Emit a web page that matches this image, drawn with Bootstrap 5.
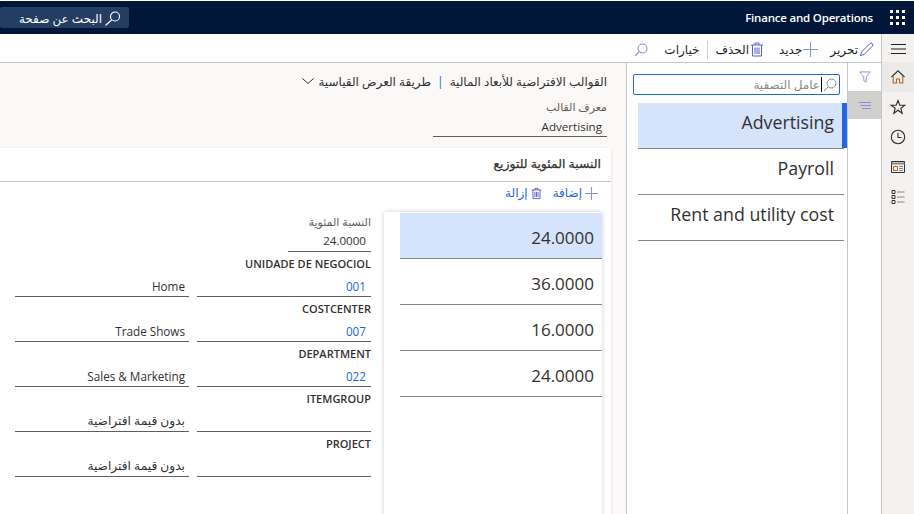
<!DOCTYPE html>
<html lang="ar" dir="rtl">
<head>
<meta charset="utf-8">
<title>Finance and Operations</title>
<link rel="stylesheet" href="https://cdn.jsdelivr.net/npm/bootstrap@5.3.0/dist/css/bootstrap.min.css">
<style>
html,body{height:100%;overflow:hidden;margin:0}
body{font-family:"Open Sans","Noto Sans","DejaVu Sans",sans-serif;font-size:12px;color:#323130;background:#fff;width:914px;height:514px}
svg{display:block;flex:none}
.topbar{height:33px;margin-top:1px;background:#00173a;color:#fff;padding-right:9px}
.waffle{display:grid;grid-template-columns:repeat(3,3px);gap:3px;width:15px;margin-left:17px}
.waffle i{width:3px;height:3px;background:#fff}
.appname{font-size:11.5px;font-weight:600;letter-spacing:-.2px;direction:ltr}
.searchbtn{width:129px;height:21px;background:#233d63;border-radius:2px;color:#fff;padding:0 9px;gap:2px;font-size:12px}
.searchbtn span{padding-top:2px}
.mainrow{height:480px;overflow:hidden}
.leftrail{width:33px;background:#f3f2f1;border-left:1px solid #c8c6c4;flex:none}
.railbtn{height:30px;width:32px}
.railbtn.home{background:#ebeae9}
.hamb{height:28px;padding-top:2px}
.workarea{flex:1;min-width:0}
.cmdbar{height:29px;border-bottom:1px solid #c8c6c4;background:#fff;padding-right:7px;padding-top:3px;font-size:12px;color:#201f1e}
.cmd{gap:1px}
.gap12{margin-right:12px}
.gap15{margin-right:15px}
.cmdsep{width:1px;height:18px;background:#d2d0ce;margin:0 7px 0 8px}
.cmdfind{margin-right:16px}
.bodyrow{height:451px;overflow:hidden}
.filterrail{width:33px;flex:none;background:#fff}
.fr1{height:28px}
.fr2{height:28px;background:#d2d0ce}
.listpane{width:222px;flex:none;background:#fff;border-left:1px solid #c8c6c4;border-right:1px solid #c8c6c4;position:relative}
.filterbox{margin:11px 7px 0 0;height:21px;width:207px;border:1px solid #2266e3;border-radius:2px;padding:0 2px;color:#8a8886;gap:1px;font-size:12px}
.caret{width:1px;height:15px;background:#000}
.navrows{margin-top:8px;margin-right:3px;width:206px}
.navrow{height:46px;border-bottom:1px solid #8a8886;font-size:17.8px;color:#323130;padding:0 10px 7px 0;display:flex;align-items:center;direction:ltr}
.navrow span{display:block;width:100%;text-align:right}
.navrow.sel{background:#d5e3fb;position:relative}
.selbar{position:absolute;right:-3px;top:0;width:5px;height:45px;background:#2266e3}
.detail{flex:1;min-width:0;background:#faf9f8;overflow:hidden;position:relative}
.crumb{padding:10px 19px 0 0;height:37px;font-size:12px;gap:4px;line-height:18px;color:#323130;align-items:flex-start!important}
.crumbsep{color:#2266e3;margin:0 2px}
.crumb svg{margin-top:2px}
.lab{font-size:11px;color:#605e5c;line-height:14px}
.idblock{margin-right:19px;width:174px;height:46px}
.idval{border-bottom:1px solid #605e5c;height:21px;line-height:22px;font-size:11.6px;text-align:right;direction:ltr;padding-right:5px;margin-top:2px}
.panelbox{position:absolute;top:85px;right:15px;width:640px;height:380px;background:#fff;border-radius:2px 0 0 2px;box-shadow:0 1px 3px rgba(0,0,0,.12)}
.panelhead{height:34px;border-bottom:1px solid #c8c6c4;padding:7px 10px 0 0;font-size:12.4px;font-weight:400;-webkit-text-stroke:.25px #323130;color:#323130;line-height:18px}
.paneltools{height:30px;padding:0 13px 8px 0;color:#2266e3;font-size:12px;gap:3px}
.subgrid{width:218px;height:310px;background:#fff;box-shadow:0 0 5px rgba(0,0,0,.2);margin-right:9px;flex:none;border-radius:2px}
.subwrap{margin-left:16px}
.subrow{width:202px;height:46px;border-bottom:1px solid #8a8886;font-size:17px;line-height:50px;direction:ltr;color:#323130;text-align:right;padding-right:8px}
.subrow.first{background:#d5e3fb;margin-top:1px}
.formcol{margin-right:13px;width:356px;flex:none}
.lab2{height:14px;font-size:11px;color:#605e5c;line-height:14px;margin-top:3px}
.pctval{width:83px;height:21px;border-bottom:1px solid #605e5c;line-height:20px;text-align:right;direction:ltr;padding-right:5px;font-size:11.6px;margin-top:2px}
.grouplab{height:14px;font-size:11px;font-weight:600;line-height:14px;color:#323130;margin-top:5px;direction:ltr;text-align:right}
.pairrow{gap:8px}
.pv{width:174px;height:26px;border-bottom:1px solid #605e5c;padding:5px 4px 0 0;line-height:20px;font-size:11.7px;text-align:right;color:#323130}
.pv.code{color:#2266e3;direction:ltr;padding-right:5px}
.pv.pvar{font-size:12.2px}
</style>
</head>
<body>
<div class="topbar d-flex align-items-center justify-content-between">
  <div class="d-flex align-items-center">
    <div class="waffle"><i></i><i></i><i></i><i></i><i></i><i></i><i></i><i></i><i></i></div>
    <span class="appname">Finance and Operations</span>
  </div>
  <div class="searchbtn d-flex align-items-center">
    <svg width="16" height="18" viewBox="0 0 16 18" fill="none" stroke="#fff" stroke-width="1.1"><circle cx="11" cy="7.500" r="4.500"/><path d="M7.500 11 1.500 16.500"/></svg>
    <span>البحث عن صفحة</span>
  </div>
</div>
<div class="mainrow d-flex">
  <div class="leftrail d-flex flex-column">
    <div class="hamb d-flex align-items-center justify-content-center">
      <svg width="15" height="16" viewBox="0 0 15 16" stroke="#201f1e" stroke-width="1.1"><path d="M0 3.500H15M0 8H15M0 12.500H15"/></svg>
    </div>
    <div class="railbtn home d-flex align-items-center justify-content-center">
      <svg width="16" height="16" viewBox="0 0 16 16" fill="none" stroke-width="1.1"><path d="M1.500 8 8 1.800 14.500 8" stroke="#323130"/><path d="M3.200 6.800V14H6.500V10H9.500V14H12.800V6.800" stroke="#a8692a"/></svg>
    </div>
    <div class="railbtn d-flex align-items-center justify-content-center">
      <svg width="16" height="16" viewBox="0 0 16 16" fill="none" stroke="#323130" stroke-width="1.1"><path d="M8 1.500 9.800 6.200H14.800L10.800 9.200 12.200 14.300 8 11.200 3.800 14.300 5.200 9.200 1.200 6.200H6.200Z"/></svg>
    </div>
    <div class="railbtn d-flex align-items-center justify-content-center">
      <svg width="16" height="16" viewBox="0 0 16 16" fill="none" stroke="#323130" stroke-width="1.1"><circle cx="8" cy="8" r="6.700"/><path d="M8 3.800V8.500H11.500"/></svg>
    </div>
    <div class="railbtn d-flex align-items-center justify-content-center">
      <svg width="16" height="16" viewBox="0 0 16 16" fill="none" stroke="#323130" stroke-width="1"><path d="M1.500 2.500H14.500V13.500H1.500Z"/><path d="M1.500 4.500H14.500" stroke="#8a8886" stroke-width="2"/><path d="M3.500 7.500H7.500V11.500H3.500Z" stroke="#a8692a"/><path d="M9 7.500H13M9 9.500H13M9 11.500H13" stroke="#8a8886"/></svg>
    </div>
    <div class="railbtn d-flex align-items-center justify-content-center">
      <svg width="16" height="16" viewBox="0 0 16 16" fill="none" stroke="#323130" stroke-width="1"><path d="M2 1.500H5V4.500H2ZM2 6.500H5V9.500H2ZM2 11.500H5V14.500H2Z"/><path d="M7 3H14.500M7 8H14.500M7 13H14.500" stroke="#8a8886"/></svg>
    </div>
  </div>
  <div class="workarea d-flex flex-column">
    <div class="cmdbar d-flex align-items-center">
      <div class="cmd d-flex align-items-center">
        <svg width="15" height="15" viewBox="0 0 15 15" fill="none" stroke="#5b5fc7" stroke-width="1"><path d="M1.500 13.500 2.500 10 10.800 1.700A1.500 1.500 0 0 1 13.300 4.200L5 12.500Z"/></svg>
        <span>تحرير</span>
      </div>
      <div class="cmd d-flex align-items-center gap12">
        <svg width="15" height="15" viewBox="0 0 15 15" stroke="#8f8fd8" stroke-width="1.100"><path d="M7.500 0V15M0 7.500H15"/></svg>
        <span>جديد</span>
      </div>
      <div class="cmd d-flex align-items-center gap15">
        <svg width="14" height="15" viewBox="0 0 14 15" fill="none" stroke="#5b5fc7" stroke-width="1"><path d="M1 3H13M5 3V1H9V3M2.500 3V14H11.500V3M5 5.500V12M7 5.500V12M9 5.500V12"/></svg>
        <span>الحذف</span>
      </div>
      <div class="cmdsep"></div>
      <span>خيارات</span>
      <div class="cmdfind">
        <svg width="14" height="14" viewBox="0 0 14 14" fill="none" stroke="#8f8fd8" stroke-width="1.100"><circle cx="8.500" cy="5.500" r="4.500"/><path d="M5 9 1 13"/></svg>
      </div>
    </div>
    <div class="bodyrow d-flex">
      <div class="filterrail">
        <div class="fr1 d-flex align-items-center justify-content-center">
          <svg width="12" height="12" viewBox="0 0 13 13" fill="none" stroke="#8f8fd8" stroke-width="1"><path d="M.8 1H12.200L7.800 6.500V12L5.200 10.500V6.500Z"/></svg>
        </div>
        <div class="fr2 d-flex align-items-center justify-content-center">
          <svg width="12" height="7" viewBox="0 0 12 7" stroke="#8f8fd8" stroke-width="1"><path d="M0 .500H12M1.500 3.500H12M3 6.500H12"/></svg>
        </div>
      </div>
      <div class="listpane">
        <div class="filterbox d-flex align-items-center">
          <svg width="14" height="14" viewBox="0 0 14 14" fill="none" stroke="#8a8886" stroke-width="1"><circle cx="8.500" cy="5.500" r="4.500"/><path d="M5 9 1 13"/></svg>
          <span class="caret"></span>
          <span>عامل التصفية</span>
        </div>
        <div class="navrows">
          <div class="navrow sel"><span>Advertising</span><i class="selbar"></i></div>
          <div class="navrow"><span>Payroll</span></div>
          <div class="navrow"><span>Rent and utility cost</span></div>
        </div>
      </div>
      <div class="detail">
        <div class="crumb d-flex align-items-center">
          <span>القوالب الافتراضية للأبعاد المالية</span><span class="crumbsep">|</span><span>طريقة العرض القياسية</span>
          <svg width="12" height="12" viewBox="0 0 12 12" fill="none" stroke="#323130" stroke-width="1"><path d="M.500 3.500 6 8.500 11.500 3.500"/></svg>
        </div>
        <div class="idblock">
          <div class="lab">معرف القالب</div>
          <div class="idval">Advertising</div>
        </div>
        <div class="panelbox">
          <div class="panelhead">النسبة المئوية للتوزيع</div>
          <div class="paneltools d-flex align-items-center">
            <svg width="13" height="13" viewBox="0 0 13 13" stroke="#8f8fd8" stroke-width="1.100"><path d="M6.500 0V13M0 6.500H13"/></svg>
            <span>إضافة</span>
            <svg class="me-2" width="11" height="13" viewBox="0 0 14 15" fill="none" stroke="#5b5fc7" stroke-width="1.200"><path d="M1 3H13M5 3V1H9V3M2.500 3V14H11.500V3M5 5.500V12M7 5.500V12M9 5.500V12"/></svg>
            <span>إزالة</span>
          </div>
          <div class="d-flex">
            <div class="subgrid">
              <div class="subwrap">
                <div class="subrow first">24.0000</div>
                <div class="subrow">36.0000</div>
                <div class="subrow">16.0000</div>
                <div class="subrow">24.0000</div>
              </div>
            </div>
            <div class="formcol">
              <div class="lab2">النسبة المئوية</div>
              <div class="pctval">24.0000</div>
              <div class="grouplab">UNIDADE DE NEGOCIOL</div>
              <div class="pairrow d-flex"><div class="pv code">001</div><div class="pv" dir="ltr">Home</div></div>
              <div class="grouplab">COSTCENTER</div>
              <div class="pairrow d-flex"><div class="pv code">007</div><div class="pv" dir="ltr">Trade Shows</div></div>
              <div class="grouplab">DEPARTMENT</div>
              <div class="pairrow d-flex"><div class="pv code">022</div><div class="pv" dir="ltr">Sales &amp; Marketing</div></div>
              <div class="grouplab">ITEMGROUP</div>
              <div class="pairrow d-flex"><div class="pv code"></div><div class="pv pvar">بدون قيمة افتراضية</div></div>
              <div class="grouplab">PROJECT</div>
              <div class="pairrow d-flex"><div class="pv code"></div><div class="pv pvar">بدون قيمة افتراضية</div></div>
            </div>
          </div>
        </div>
      </div>
    </div>
  </div>
</div>
</body>
</html>
